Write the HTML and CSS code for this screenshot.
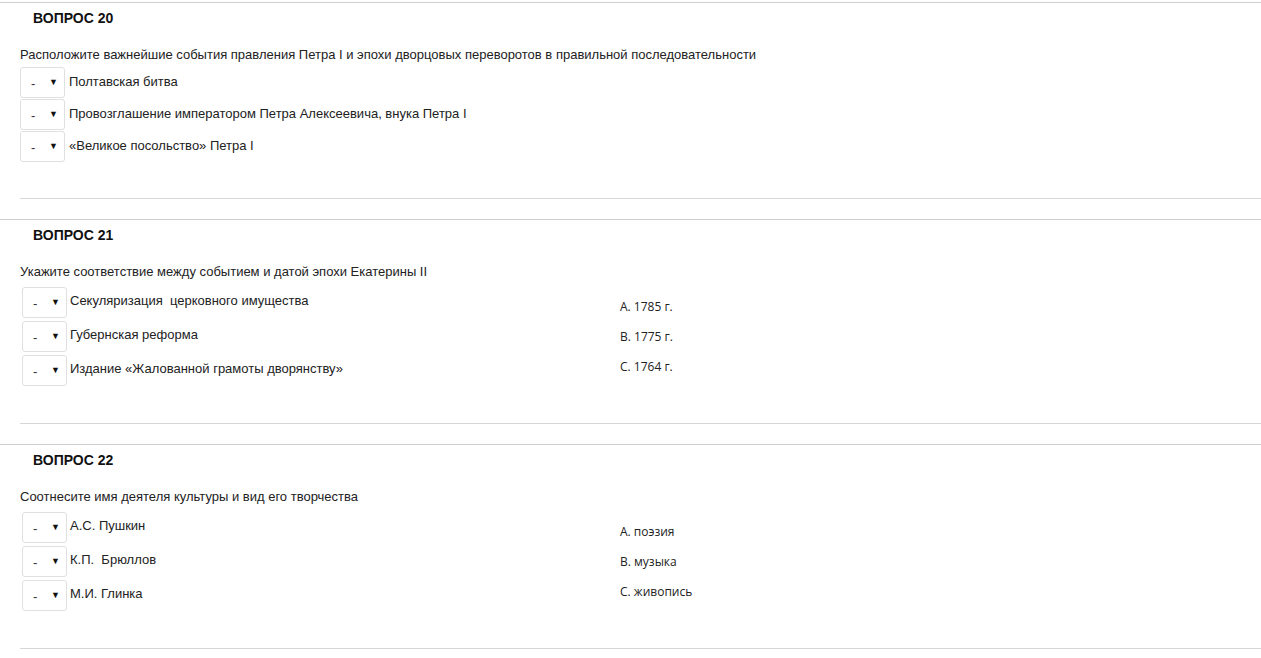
FILE: index.html
```html
<!DOCTYPE html>
<html lang="ru">
<head>
  <meta charset="UTF-8" />
  <meta name="viewport" content="width=device-width, initial-scale=1.0" />
  <title>Тест по истории</title>
  <link rel="stylesheet" href="styles.css">
</head>
<body>

  <div class="question">
    <div class="question-inner">
      <h3>ВОПРОС 20</h3>
      <p class="task">Расположите важнейшие события правления Петра I и эпохи дворцовых переворотов в правильной последовательности</p>
      <div class="rows order">
        <div class="row"><div class="pick"><span>-</span><span class="arrow">▼</span></div><span class="label">Полтавская битва</span></div>
        <div class="row"><div class="pick"><span>-</span><span class="arrow">▼</span></div><span class="label">Провозглашение императором Петра Алексеевича, внука Петра I</span></div>
        <div class="row"><div class="pick"><span>-</span><span class="arrow">▼</span></div><span class="label">«Великое посольство» Петра I</span></div>
      </div>
    </div>
  </div>

  <div class="question">
    <div class="question-inner">
      <h3>ВОПРОС 21</h3>
      <p class="task">Укажите соответствие между событием и датой эпохи Екатерины II</p>
      <div class="match">
        <div class="rows">
          <div class="row"><div class="pick"><span>-</span><span class="arrow">▼</span></div><span class="label">Секуляризация&nbsp; церковного имущества</span></div>
          <div class="row"><div class="pick"><span>-</span><span class="arrow">▼</span></div><span class="label">Губернская реформа</span></div>
          <div class="row"><div class="pick"><span>-</span><span class="arrow">▼</span></div><span class="label">Издание «Жалованной грамоты дворянству»</span></div>
        </div>
        <div class="answers">
          <span>A. 1785 г.</span>
          <span>B. 1775 г.</span>
          <span>C. 1764 г.</span>
        </div>
      </div>
    </div>
  </div>

  <div class="question">
    <div class="question-inner">
      <h3>ВОПРОС 22</h3>
      <p class="task">Соотнесите имя деятеля культуры и вид его творчества</p>
      <div class="match">
        <div class="rows">
          <div class="row"><div class="pick"><span>-</span><span class="arrow">▼</span></div><span class="label">А.С. Пушкин</span></div>
          <div class="row"><div class="pick"><span>-</span><span class="arrow">▼</span></div><span class="label">К.П.&nbsp; Брюллов</span></div>
          <div class="row"><div class="pick"><span>-</span><span class="arrow">▼</span></div><span class="label">М.И. Глинка</span></div>
        </div>
        <div class="answers">
          <span>A. поэзия</span>
          <span>B. музыка</span>
          <span>C. живопись</span>
        </div>
      </div>
    </div>
  </div>

</body>
</html>
```

FILE: styles.css
```css
body {
  margin: 0;
  padding-top: 2px;
  background: #fff;
  color: #222;
  font-family: "Liberation Sans", Arial, sans-serif;
  font-size: 13px;
}
.question {
  border-top: 1px solid #cfcfcf;
  margin-bottom: 20px;
}
.question-inner {
  margin-left: 20px;
  padding-top: 7px;
  border-bottom: 1px solid #d6d6d6;
  height: 188px;
}
.question + .question .question-inner {
  height: 196px;
}
h3 {
  margin: 0 0 0 13px;
  font-size: 14px;
  line-height: 16px;
  font-weight: bold;
  color: #111;
}
.task {
  margin: 21px 0 0;
  line-height: 16px;
}
.rows {
  display: flex;
  flex-direction: column;
  margin-top: 3px;
}
.row {
  display: flex;
  align-items: center;
  height: 32px;
}
.match {
  display: flex;
  margin-top: 5px;
  padding-left: 2px;
}
.match .rows {
  margin-top: 0;
  width: 598px;
}
.match .row {
  height: 34px;
}
.pick {
  box-sizing: border-box;
  width: 45px;
  height: 31px;
  border: 1px solid #e0e0e0;
  border-radius: 3px;
  display: flex;
  align-items: center;
  justify-content: space-between;
  padding: 3px 6px 0 10px;
  color: #333;
}
.arrow {
  font-size: 9px;
  color: #111;
  margin-top: -3px;
}
.label {
  margin-left: 4px;
  margin-top: -2px;
  color: #222;
}
.match .label {
  margin-left: 3px;
  margin-top: -4px;
}
.answers {
  display: flex;
  flex-direction: column;
  gap: 14px;
  padding-top: 14px;
  font-family: "Open Sans", sans-serif;
  font-size: 12px;
  line-height: 16px;
  color: #222;
}
```
